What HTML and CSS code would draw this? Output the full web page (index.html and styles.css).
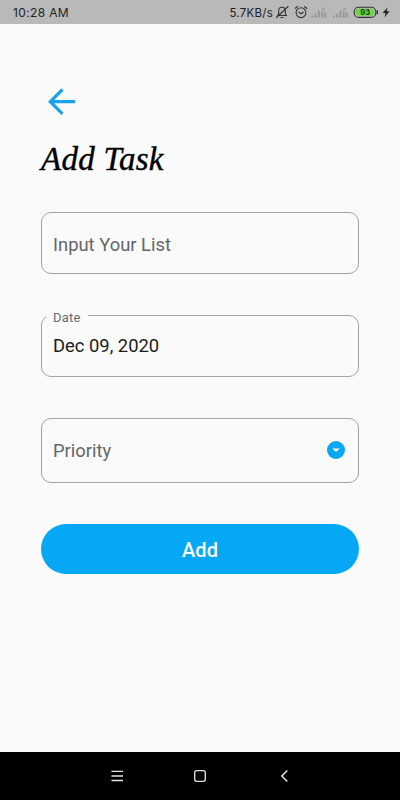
FILE: index.html
```html
<!DOCTYPE html>
<html lang="en">
<head>
<meta charset="utf-8">
<title>Add Task</title>
<link rel="stylesheet" href="styles.css">
</head>
<body>
<div class="phone">
  <header class="status">
    <span class="clock">10:28 AM</span>
    <span class="speed">5.7KB/s</span>
    <svg class="status-icons" width="127" height="24" viewBox="273 0 127 24" fill="none" stroke="#333" stroke-width="1.1" stroke-linecap="round" stroke-linejoin="round">
      <path d="M277.5 15.5h9l-1.2-1.8v-3.2a3.3 3.3 0 0 0-6.6 0v3.2zM281 17.5h2M276.5 17.5 288 6.5"/>
      <circle cx="301" cy="12.7" r="4.9"/>
      <path d="M298.8 12.2l2.2 1.6 2.3-1.6M295.3 8.3l2.3-1.8M306.7 8.3l-2.3-1.8"/>
      <g stroke="#969696" stroke-width="1.9" stroke-linecap="butt">
        <path d="M312.3 17.5v-2M315.6 17.5v-4M318.9 17.5v-7M322.2 17.5v-6M325.2 17.5v-5"/>
        <path d="M333.8 17.5v-2M337.1 17.5v-4M340.4 17.5v-7M343.7 17.5v-6M346.7 17.5v-5"/>
        <path d="M321.5 7.5l3.5 3.5M325 7.5l-3.5 3.5M343 7.5l3.5 3.5M346.5 7.5l-3.5 3.5" stroke-width="1"/>
      </g>
      <rect x="354.2" y="7.2" width="21.6" height="10.2" rx="4.5" stroke="#333"/>
      <rect x="355.8" y="8.8" width="18.4" height="7" rx="3" fill="#68d83c" stroke="none"/>
      <path d="M377.3 10.8v3" stroke-width="1.4"/>
      <text x="365.2" y="15.2" class="battery" text-anchor="middle">93</text>
      <path d="M387.6 7.3l-5 5.8h3l-1.2 4.3 5.2-6.1h-3.1z" fill="#222" stroke="none"/>
    </svg>
  </header>

  <main class="content">
    <svg class="back" width="28" height="28" viewBox="0 0 28 28" fill="none" stroke="#18a3ea" stroke-width="3.2">
      <path d="M28 13.7H3.5M15.5 1.5 3.3 13.7l12.2 12.2"/>
    </svg>
    <h1 class="title">Add Task</h1>
    <div class="field field-input">Input Your List</div>
    <fieldset class="field-date">
      <legend>Date</legend>
      <span>Dec 09, 2020</span>
    </fieldset>
    <div class="field field-priority">
      <span>Priority</span>
      <svg width="20" height="20" viewBox="0 0 20 20"><circle cx="10" cy="9" r="9" fill="#07a7f2"/><path d="M6.3 7.4h7.4L10 11.1z" fill="#fff"/></svg>
    </div>
    <button class="add">Add</button>
  </main>

  <nav class="nav">
    <svg width="400" height="48" viewBox="0 752 400 48" fill="none" stroke="#e4e4e4" stroke-width="1.3">
      <path d="M111.5 771.3h11.5M111.5 776h11.5M111.5 780.5h11.5"/>
      <rect x="194.7" y="770.7" width="10.6" height="10.6" rx="2"/>
      <path d="M287.3 770.5l-5.5 5.5 5.5 5.5" stroke-width="1.5"/>
    </svg>
  </nav>
</div>
</body>
</html>
```
FILE: styles.css
```css
* { box-sizing: border-box; }
body { margin: 0; background: #fafafa; font-family: Roboto, sans-serif; }
.phone { width: 400px; height: 800px; display: flex; flex-direction: column; overflow: hidden; }
.status {
  flex: none; height: 24px; display: flex; align-items: center;
  padding-left: 13px; background: #b9b9b9; color: #222;
  font: 12px/24px Inter, sans-serif;
}
.clock { letter-spacing: .35px; padding-top: 2px; }
.speed { margin-left: auto; padding-top: 2px; font-size: 11.5px; letter-spacing: .25px; }
.status-icons { flex: none; display: block; }
.battery { font: 700 7.5px Inter, sans-serif; fill: #174010; stroke: none; }

.content { flex: 1; display: flex; flex-direction: column; padding: 64px 41px 0; }
.back { display: block; margin-left: 6px; }
.title {
  margin: 24px 0 0; height: 36px; white-space: nowrap; color: #000;
  font: italic 400 33px/39px "Liberation Serif", serif;
  letter-spacing: .25px; -webkit-text-stroke: .4px #000;
}
.field {
  display: flex; align-items: center; border: 1px solid #a3a3a3; border-radius: 10px;
  padding: 0 11px; color: #666; font-size: 18.4px;
}
.field-input { height: 62px; margin-top: 36px; padding-top: 2px; }
.field-date {
  margin: 34px 0 0; height: 69px; padding: 0 12px 0 4px; border: 1px solid #a3a3a3;
  border-radius: 10px; color: #1c1c1c; font-size: 18.4px;
}
.field-date legend { padding: 0 7px; height: 15px; color: #6b6b6b; font-size: 13px; line-height: 19px; letter-spacing: .2px; }
.field-date span { display: block; padding-left: 7px; line-height: 22px; margin-top: 12px; }
.field-priority { height: 65px; margin-top: 41px; justify-content: space-between; padding-right: 12px; }
.add {
  height: 50.5px; margin-top: 40.5px; border: 0; border-radius: 26px; background: #06a8f5;
  color: #fff; font: 500 20px Roboto, sans-serif; padding-top: 3px;
}
.nav { flex: none; height: 48px; background: #000; }
.nav svg { display: block; }
```
